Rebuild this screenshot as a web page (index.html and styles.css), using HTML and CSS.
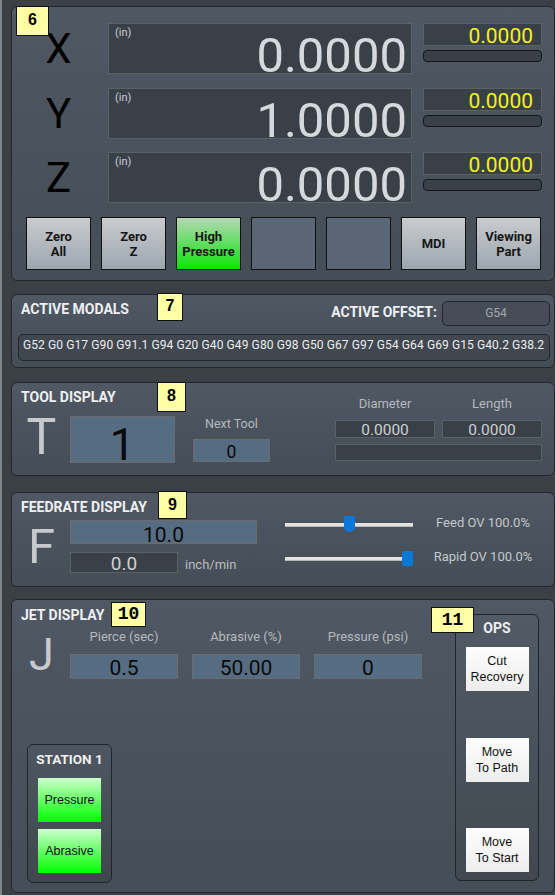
FILE: index.html
```html
<!DOCTYPE html>
<html lang="en">
<head>
    <meta charset="UTF-8">
    <meta name="viewport" content="width=device-width, initial-scale=1.0">
    <title>Waterjet Control</title>
    <link rel="stylesheet" href="styles.css">
</head>
<body>
    <!-- position readouts -->
    <div class="panel dro">
        <span class="tag tag-6">6</span>
        <div class="axes">
            <div class="axis-name">X</div>
            <div class="readout"><span class="unit">(in)</span><span class="pos">0.0000</span></div>
            <div class="aux"><div class="dtg">0.0000</div><div class="meter"></div></div>

            <div class="axis-name">Y</div>
            <div class="readout"><span class="unit">(in)</span><span class="pos">1.0000</span></div>
            <div class="aux"><div class="dtg">0.0000</div><div class="meter"></div></div>

            <div class="axis-name">Z</div>
            <div class="readout"><span class="unit">(in)</span><span class="pos">0.0000</span></div>
            <div class="aux"><div class="dtg">0.0000</div><div class="meter"></div></div>
        </div>
        <div class="keys">
            <button class="key">Zero<br>All</button>
            <button class="key">Zero<br>Z</button>
            <button class="key key-on">High<br>Pressure</button>
            <button class="key key-blank"></button>
            <button class="key key-blank"></button>
            <button class="key">MDI</button>
            <button class="key">Viewing<br>Part</button>
        </div>
    </div>

    <div class="panel modals">
        <span class="tag tag-7">7</span>
        <div class="modals-head">
            <h3 class="title">ACTIVE MODALS</h3>
            <span class="offset-label">ACTIVE OFFSET:</span>
            <span class="offset-box">G54</span>
        </div>
        <div class="modal-line">G52 G0 G17 G90 G91.1 G94 G20 G40 G49 G80 G98 G50 G67 G97 G54 G64 G69 G15 G40.2 G38.2</div>
    </div>

    <div class="panel tool">
        <span class="tag tag-8">8</span>
        <div class="tool-main">
            <h3 class="title">TOOL DISPLAY</h3>
            <div class="tool-row">
                <div class="letter letter-t">T</div>
                <div class="field blue tool-num">1</div>
                <div class="next-tool">
                    <div class="label">Next Tool</div>
                    <div class="field blue next-num">0</div>
                </div>
            </div>
        </div>
        <div class="offsets">
            <div class="label">Diameter</div>
            <div class="label">Length</div>
            <div class="field dark off-val">0.0000</div>
            <div class="field dark off-val">0.0000</div>
            <div class="field dark off-bar"></div>
        </div>
    </div>

    <div class="panel feed">
        <span class="tag tag-9">9</span>
        <div class="feed-main">
            <h3 class="title">FEEDRATE DISPLAY</h3>
            <div class="feed-row">
                <div class="letter letter-f">F</div>
                <div class="feed-fields">
                    <div class="field blue feed-cmd">10.0</div>
                    <div class="feed-actual">
                        <div class="field dark feed-act">0.0</div>
                        <span class="unit-label">inch/min</span>
                    </div>
                </div>
            </div>
        </div>
        <div class="overrides">
            <div class="slider">
                <div class="track"></div>
                <div class="thumb thumb-feed" style="left: 59px;"></div>
            </div>
            <div class="ov-label">Feed OV 100.0%</div>
            <div class="slider slider-rapid">
                <div class="track"></div>
                <div class="thumb" style="left: 117px;"></div>
            </div>
            <div class="ov-label">Rapid OV 100.0%</div>
        </div>
    </div>

    <div class="panel jet">
        <span class="tag tag-mono tag-10">10</span>
        <span class="tag tag-mono tag-11">11</span>
        <div class="jet-main">
            <h3 class="title">JET DISPLAY</h3>
            <div class="jet-row">
                <div class="letter letter-j">J</div>
                <div class="jet-cols">
                    <div class="jet-col">
                        <div class="label">Pierce (sec)</div>
                        <div class="field blue jet-val">0.5</div>
                    </div>
                    <div class="jet-col">
                        <div class="label">Abrasive (%)</div>
                        <div class="field blue jet-val">50.00</div>
                    </div>
                    <div class="jet-col">
                        <div class="label">Pressure (psi)</div>
                        <div class="field blue jet-val">0</div>
                    </div>
                </div>
            </div>
            <div class="station">
                <div class="station-title">STATION 1</div>
                <button class="valve">Pressure</button>
                <button class="valve">Abrasive</button>
            </div>
        </div>
        <div class="ops">
            <div class="ops-title">OPS</div>
            <div class="ops-list">
                <button class="op-btn">Cut<br>Recovery</button>
                <button class="op-btn">Move<br>To Path</button>
                <button class="op-btn">Move<br>To Start</button>
            </div>
        </div>
    </div>
</body>
</html>
```

FILE: styles.css
```css
* {
    box-sizing: border-box;
}

body {
    margin: 0;
    width: 555px;
    height: 895px;
    overflow: hidden;
    background-color: #3b4047;
    border-left: 2px solid #7f848a;
    font-family: Roboto, "Liberation Sans", sans-serif;
    color: #eef0f2;
}

.panel {
    position: relative;
    width: 544px;
    margin-left: 9px;
    border: 1px solid #23272c;
    border-radius: 6px;
    background: linear-gradient(#4f5863, #454d56);
}

.title {
    margin: 0;
    font-size: 14px;
    line-height: 16px;
    font-weight: bold;
    color: #eef0f2;
}

.label {
    font-size: 13px;
    line-height: 15px;
    text-align: center;
    color: #b5b9bd;
}

.field {
    border: 1px solid #6a6c6e;
    text-align: center;
    white-space: nowrap;
}

.field.blue {
    background-color: #566c82;
    color: #0a0a0a;
}

.field.dark {
    background-color: #3a4048;
    border-color: #5c6166;
    color: #ccd0d4;
}

.letter {
    width: 41px;
    text-align: center;
    color: #c6cacd;
}

/* yellow callout numbers */
.tag {
    position: absolute;
    z-index: 2;
    background-color: #ffffa4;
    border: 1px solid #111;
    color: #000;
    font: bold 16px/1 "Liberation Sans", sans-serif;
    text-align: center;
}

.tag-mono {
    font: bold 18px/1 "Liberation Mono", monospace;
}

.tag-6 { left: 4px; top: -1px; width: 33px; height: 30px; padding-top: 5px; }
.tag-7 { left: 145px; top: -2px; width: 26px; height: 28px; padding-top: 4px; }
.tag-8 { left: 145px; top: -1px; width: 29px; height: 30px; padding-top: 5px; }
.tag-9 { left: 146px; top: -2px; width: 29px; height: 28px; padding-top: 5px; }
.tag-10 { left: 99px; top: 2px; width: 35px; height: 25px; padding-top: 2px; }
.tag-11 { left: 419px; top: 7px; width: 43px; height: 26px; padding-top: 3px; }

/* DRO */
.dro {
    margin-top: 6px;
    height: 275px;
    padding-top: 16px;
}

.axes {
    display: grid;
    grid-template-columns: 96px 304px 130px;
    grid-auto-rows: 51px;
    row-gap: 13.5px;
}

.axis-name {
    font-size: 42px;
    line-height: 51px;
    text-align: center;
    padding-right: 3px;
    color: #000;
}

.readout {
    display: flex;
    flex-direction: column;
    border: 1px solid #5c6166;
    background-color: #3a4048;
    padding: 2px 4px 0 6px;
}

.unit {
    font-size: 11px;
    line-height: 13px;
    color: #c9cdd1;
}

.pos {
    font-size: 49px;
    line-height: 33px;
    text-align: right;
    color: #d5d9dd;
}

.aux {
    padding-left: 11px;
}

.dtg {
    height: 23px;
    border: 1px solid #5c6166;
    background-color: #3a4048;
    color: #f2f21c;
    font-size: 21px;
    line-height: 21px;
    padding: 2px 8px 0 0;
    text-align: right;
}

.meter {
    margin-top: 4px;
    height: 12px;
    border: 1px solid #15181b;
    border-radius: 4px;
    background-color: #3a4048;
}

.keys {
    display: flex;
    gap: 10px;
    margin-top: 14px;
    padding-left: 14px;
}

.key {
    width: 65px;
    height: 53px;
    padding: 0;
    border: 1px solid #111;
    background: linear-gradient(#c9cbcd, #9ca6b0);
    font: bold 13px/15px Roboto, sans-serif;
    color: #161616;
}

.key-on {
    background: linear-gradient(#b4d8b4, #0ce40c);
}

.key-blank {
    background: #5a6576;
}

/* modals */
.modals {
    margin-top: 13px;
    height: 74px;
    padding: 6px 4px 0 6px;
}

.modals-head {
    display: flex;
    align-items: flex-start;
    height: 25px;
}

.modals .title {
    padding-left: 3px;
}

.offset-label {
    margin-left: auto;
    margin-top: 3px;
    font-size: 14px;
    line-height: 16px;
    font-weight: bold;
}

.offset-box {
    width: 108px;
    height: 25px;
    margin-left: 5px;
    border: 1px solid #22262b;
    border-radius: 5px;
    background-color: #464d56;
    color: #a1a6ab;
    font-size: 12px;
    line-height: 23px;
    text-align: center;
}

.modal-line {
    margin-top: 8px;
    height: 27px;
    padding-left: 4px;
    border: 1px solid #24282c;
    border-radius: 5px;
    background-color: #40474f;
    color: #eceef0;
    font-size: 12px;
    line-height: 20px;
    letter-spacing: 0.1px;
    white-space: nowrap;
    overflow: hidden;
}

/* tool */
.tool {
    display: flex;
    margin-top: 14px;
    height: 94px;
    padding: 6px 0 0 9px;
}

.tool-row {
    display: flex;
    align-items: flex-start;
    margin-top: 11px;
}

.letter-t {
    font-size: 50px;
    line-height: 42px;
}

.tool-num {
    width: 105px;
    height: 47px;
    margin-left: 8px;
    padding-top: 5px;
    font-size: 45px;
    line-height: 45px;
}

.next-tool {
    width: 77px;
    margin-left: 18px;
}

.next-tool .label {
    font-size: 12.5px;
}

.next-num {
    margin-top: 8px;
    height: 23px;
    padding-top: 2px;
    font-size: 17.5px;
    line-height: 21px;
}

.offsets {
    display: grid;
    grid-template-columns: 100px 100px;
    column-gap: 7px;
    align-content: start;
    margin: 7px 12px 0 auto;
}

.off-val {
    margin-top: 9px;
    height: 18px;
    padding-top: 1px;
    font-size: 15.5px;
    line-height: 16px;
}

.off-bar {
    grid-column: 1 / -1;
    margin-top: 6px;
    height: 17px;
}

/* feedrate */
.feed {
    display: flex;
    margin-top: 16px;
    height: 95px;
    padding: 6px 0 0 9px;
}

.feed-row {
    display: flex;
    align-items: flex-start;
    margin-top: 5px;
}

.letter-f {
    font-size: 49px;
    line-height: 53px;
}

.feed-fields {
    margin-left: 8px;
}

.feed-cmd {
    width: 187px;
    height: 24px;
    padding-top: 2.5px;
    font-size: 21px;
    line-height: 22px;
}

.feed-actual {
    display: flex;
    margin-top: 8px;
}

.feed-act {
    width: 108px;
    height: 21px;
    font-size: 19px;
    line-height: 21px;
}

.unit-label {
    margin-left: 7px;
    padding-top: 2px;
    font-size: 13px;
    line-height: 21px;
    color: #b9bdc1;
}

.overrides {
    display: grid;
    grid-template-columns: 128px 140px;
    grid-auto-rows: 34px;
    align-items: center;
    margin: 8px 1px 0 auto;
    align-content: start;
}

.slider {
    position: relative;
    height: 16px;
}

.track {
    position: absolute;
    left: 0;
    right: 0;
    top: 7px;
    height: 4px;
    background-color: #e2e2e2;
    border-bottom: 1px solid #b8b8b8;
}

.thumb {
    position: absolute;
    top: 0;
    width: 11px;
    height: 16px;
    border-radius: 1px;
    background-color: #0a78d6;
}

.thumb-feed {
    border-radius: 2px 2px 5px 5px;
}

.slider-rapid .thumb {
    top: 1px;
    height: 15px;
}

.ov-label {
    text-align: center;
    font-size: 13px;
    line-height: 15px;
    padding-bottom: 3px;
    color: #c4c8cc;
}

/* jet */
.jet {
    display: flex;
    margin-top: 12px;
    height: 294px;
    padding: 7px 0 0 9px;
}

.jet-main {
    display: flex;
    flex-direction: column;
    flex: 1;
}

.jet-row {
    display: flex;
    align-items: flex-start;
    margin-top: 6px;
}

.letter-j {
    font-size: 45px;
    line-height: 51px;
}

.jet-cols {
    display: flex;
    gap: 14px;
    margin-left: 8px;
}

.jet-col {
    width: 108px;
}

.jet-val {
    margin-top: 10px;
    height: 25px;
    padding-top: 1.5px;
    font-size: 21px;
    line-height: 23px;
}

.station {
    display: flex;
    flex-direction: column;
    align-items: center;
    width: 85px;
    margin: auto 0 9px 6px;
    padding: 6px 0 9px;
    border: 1px solid #22262a;
    border-radius: 6px;
    background: linear-gradient(#4e5761, #3f464e);
}

.station-title {
    font-size: 13.5px;
    line-height: 16px;
    font-weight: bold;
}

.valve {
    width: 63px;
    height: 44px;
    margin-top: 7px;
    padding: 0;
    border: none;
    background: linear-gradient(#ccffcc, #00ff00);
    font: 12.5px/16px "Liberation Sans", sans-serif;
    color: #111;
}

.station-title + .valve {
    margin-top: 11px;
}

.ops {
    display: flex;
    flex-direction: column;
    align-items: center;
    width: 84px;
    margin: 7px 15px 11px 0;
    padding: 5px 0 8px;
    border: 1px solid #22262a;
    border-radius: 6px;
    background: linear-gradient(#525b65, #414850);
}

.ops-title {
    font-size: 14px;
    line-height: 16px;
    font-weight: bold;
}

.ops-list {
    flex: 1;
    display: flex;
    flex-direction: column;
    justify-content: space-between;
    margin-top: 11px;
}

.op-btn {
    width: 63px;
    height: 44px;
    padding: 0;
    border: none;
    background: linear-gradient(#fdfdfd, #ededed);
    font: 12.5px/16px "Liberation Sans", sans-serif;
    color: #111;
}
```
